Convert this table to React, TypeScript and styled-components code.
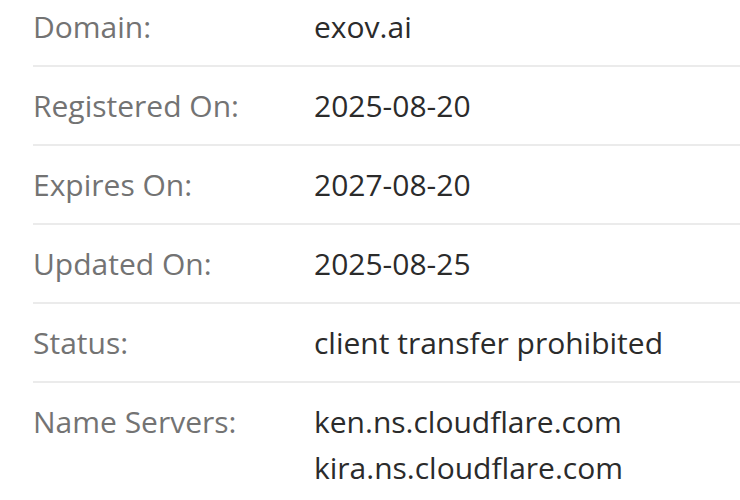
import React from "react";
import styled, { createGlobalStyle } from "styled-components";

const GlobalStyle = createGlobalStyle`
  html, body {
    margin: 0;
    background: #fff;
    overflow: hidden;
  }
`;

const List = styled.div`
  margin: -12px 0 0 33px;
  font-family: "Open Sans", "Noto Sans", sans-serif;
  font-size: 30px;
  line-height: 46px;
`;

const Row = styled.div`
  display: grid;
  grid-template-columns: 281px 1fr;
  padding: 15.5px 0;
  border-bottom: 2px solid #ebebeb;

  &:last-child {
    border-bottom: none;
  }
`;

const Label = styled.div`
  color: #737373;
`;

const Value = styled.div`
  color: #2b2b2b;
`;

const rows: { label: string; values: string[] }[] = [
  { label: "Domain:", values: ["exov.ai"] },
  { label: "Registered On:", values: ["2025-08-20"] },
  { label: "Expires On:", values: ["2027-08-20"] },
  { label: "Updated On:", values: ["2025-08-25"] },
  { label: "Status:", values: ["client transfer prohibited"] },
  { label: "Name Servers:", values: ["ken.ns.cloudflare.com", "kira.ns.cloudflare.com"] },
];

function App() {
  return (
    <>
      <GlobalStyle />
      <List>
        {rows.map((r) => (
          <Row key={r.label}>
            <Label>{r.label}</Label>
            <Value>
              {r.values.map((v) => (
                <div key={v}>{v}</div>
              ))}
            </Value>
          </Row>
        ))}
      </List>
    </>
  );
}

export default App;
